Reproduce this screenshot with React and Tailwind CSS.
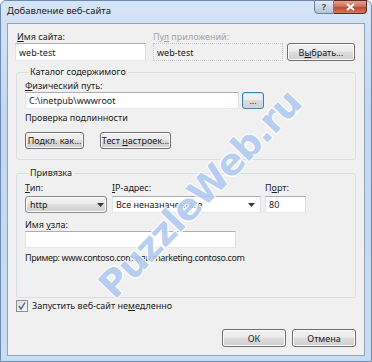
import React from 'react';

const font = { fontFamily: '"Noto Sans", "DejaVu Sans", sans-serif' };

function Btn({ children, className = '', focused = false }) {
    return (
        <div
            className={`flex items-center justify-center rounded-[3px] border text-[9px] leading-none text-[#1b1b1b]
                bg-[linear-gradient(#f2f2f2_0%,#ebebeb_45%,#dddddd_50%,#cfcfcf_100%)]
                ${focused ? 'border-[#3c7fb1] shadow-[inset_0_0_0_1px_#bfe3f7]' : 'border-[#707070] shadow-[inset_0_0_0_1px_#fbfbfb]'} ${className}`}
        >
            {children}
        </div>
    );
}

function Field({ children, className = '', disabled = false }) {
    return (
        <div
            className={`flex items-center px-[3px] border text-[9px] leading-none text-[#1b1b1b]
                ${disabled ? 'border-dotted border-[#c9c9c9] bg-[#f0f0f0]' : 'border-[#abadb3] border-r-[#dbdfe6] border-b-[#e3e9ef] border-l-[#e2e3ea] bg-white'} ${className}`}
        >
            {children}
        </div>
    );
}

function Label({ children, className = '' }) {
    return <div className={`h-[12px] leading-[12px] text-[9px] text-[#1b1b1b] whitespace-nowrap ${className}`}>{children}</div>;
}

function Arrow() {
    return (
        <svg width="7" height="4" viewBox="0 0 7 4" className="ml-auto mr-[2px]">
            <path d="M0 0h7L3.5 4z" fill="#3a3a3a" />
        </svg>
    );
}

export default function App() {
    return (
        <div style={font} className="relative w-[372px] h-[362px] overflow-hidden bg-white">
            {/* window frame */}
            <div className="flex flex-col w-[372px] h-[362px] rounded-t-[6px] border border-[#6b8bb3]
                        bg-[linear-gradient(180deg,#d6e5f6_0%,#c3d7ef_30%,#c9dcf1_100%)] px-[6px] pb-[5px]">

                {/* title bar */}
                <div className="flex h-[22px] items-start">
                    <span className="mt-[4px] text-[9.5px] leading-[12px] text-[#1e1e1e]">Добавление веб-сайта</span>
                    <div className="ml-auto -mt-px mr-[-2px] flex">
                        <div className="flex h-[14px] w-[20px] items-center justify-center rounded-bl-[4px] border border-[#6f7f99]
                                    bg-[linear-gradient(#e4ecf6_0%,#c9d6e6_50%,#b4c4d8_100%)] text-[9px] font-bold text-[#3e4c62]">?</div>
                        <div className="flex h-[14px] w-[33px] items-center justify-center rounded-br-[4px] border border-l-0 border-[#5d2a22]
                                    bg-[linear-gradient(#e3a28f_0%,#cf6f5b_45%,#c04a32_55%,#cf7b5f_100%)]">
                            <svg width="9" height="8" viewBox="0 0 9 8">
                                <path d="M1 1l7 6M8 1L1 7" stroke="#fff" strokeWidth="2" />
                            </svg>
                        </div>
                    </div>
                </div>

                {/* client area */}
                <div className="flex flex-1 flex-col border border-[#8ea3bf] bg-[#f0f0f0] pl-[7px] pr-[8px] pt-[7px] pb-[8px]">

                    {/* site name / pool */}
                    <div className="flex">
                        <div className="w-[131px]">
                            <Label className="pl-[2px]"><u>И</u>мя сайта:</Label>
                            <Field className="h-[18px]">web-test</Field>
                        </div>
                        <div className="ml-[7px] w-[130px]">
                            <Label className="text-[#a3a3a3]">Пу<u>л</u> приложений:</Label>
                            <Field disabled className="h-[18px]">web-test</Field>
                        </div>
                        <div className="ml-[4px] flex flex-col">
                            <div className="h-[12px]" />
                            <Btn className="h-[18px] w-[68px]"><span>В<u>ы</u>брать...</span></Btn>
                        </div>
                    </div>

                    {/* content directory */}
                    <fieldset className="mt-[5px] ml-px rounded-[3px] border border-[#d5dfe5] px-[8px] pb-[10px]">
                        <legend className="ml-[3px] px-[2px] h-[12px] leading-[12px] text-[9px] text-[#1b1b1b]">Каталог содержимого</legend>
                        <div className="pt-[2px]">
                            <Label><u>Ф</u>изический путь:</Label>
                            <div className="flex">
                                <Field className="h-[17px] w-[214px]">C:\inetpub\wwwroot</Field>
                                <Btn focused className="ml-[3px] h-[17px] w-[22px]">...</Btn>
                            </div>
                            <Label className="mt-[3px]">Проверка подлинности</Label>
                            <div className="mt-[8px] flex">
                                <Btn className="h-[17px] w-[59px]"><span>Подкл. как...</span></Btn>
                                <Btn className="ml-[16px] h-[17px] w-[71px]"><span>Тест <u>н</u>астроек...</span></Btn>
                            </div>
                        </div>
                    </fieldset>

                    {/* binding */}
                    <fieldset className="mt-[7px] ml-px rounded-[3px] border border-[#d5dfe5] px-[8px] pb-[33px]">
                        <legend className="ml-[3px] px-[2px] h-[12px] leading-[12px] text-[9px] text-[#1b1b1b]">Привязка</legend>
                        <div className="pt-[3px]">
                            <div className="flex">
                                <div className="w-[82px]">
                                    <Label><u>Т</u>ип:</Label>
                                    <Btn className="mt-[2px] h-[17px] !justify-start pl-[4px] !border-[#8b8b8b]">
                                        <span>http</span>
                                        <Arrow />
                                    </Btn>
                                </div>
                                <div className="ml-[5px] w-[149px]">
                                    <Label><u>I</u>P-адрес:</Label>
                                    <Field className="mt-[2px] h-[17px]">
                                        <span>Все неназначенные</span>
                                        <Arrow />
                                    </Field>
                                </div>
                                <div className="ml-[4px] w-[41px]">
                                    <Label>П<u>о</u>рт:</Label>
                                    <Field className="mt-[2px] h-[17px]">80</Field>
                                </div>
                            </div>
                            <Label className="mt-[6px]">Имя <u>у</u>зла:</Label>
                            <Field className="h-[17px] w-[211px]" />
                            <Label className="mt-[4px] tracking-[-0.4px]">Пример: www.contoso.com или marketing.contoso.com</Label>
                        </div>
                    </fieldset>

                    {/* start now */}
                    <div className="mt-[2px] ml-px flex items-center">
                        <div className="flex h-[12px] w-[12px] items-center justify-center border border-[#8e8f8f]
                                    bg-[linear-gradient(135deg,#dcdcdc,#fbfbfb)]">
                            <svg width="8" height="8" viewBox="0 0 8 8">
                                <path d="M1 4l2 3L7 0.5" stroke="#4a5f97" strokeWidth="1.4" fill="none" />
                            </svg>
                        </div>
                        <span className="ml-[4px] text-[9px] leading-[12px] text-[#1b1b1b]">Запустить веб-сайт не<u>м</u>едленно</span>
                    </div>

                    {/* OK / Cancel */}
                    <div className="mt-auto flex justify-end gap-[6px]">
                        <Btn className="h-[18px] w-[64px]">ОК</Btn>
                        <Btn className="h-[18px] w-[64px]">Отмена</Btn>
                    </div>
                </div>
            </div>

            {/* watermark */}
            <div className="pointer-events-none absolute left-[200px] top-[194px] -translate-x-1/2 -translate-y-1/2 -rotate-[46deg]
                        whitespace-nowrap text-[37px] font-bold leading-none tracking-[-1px] text-[#b3cbf0] opacity-90
                        [text-shadow:1px_1px_0_#fff,-1px_-1px_0_#fff,1px_-1px_0_#fff,-1px_1px_0_#fff]"
                style={{ fontFamily: '"DejaVu Sans", sans-serif' }}>
                PuzzleWeb.ru
            </div>
        </div>
    );
}
